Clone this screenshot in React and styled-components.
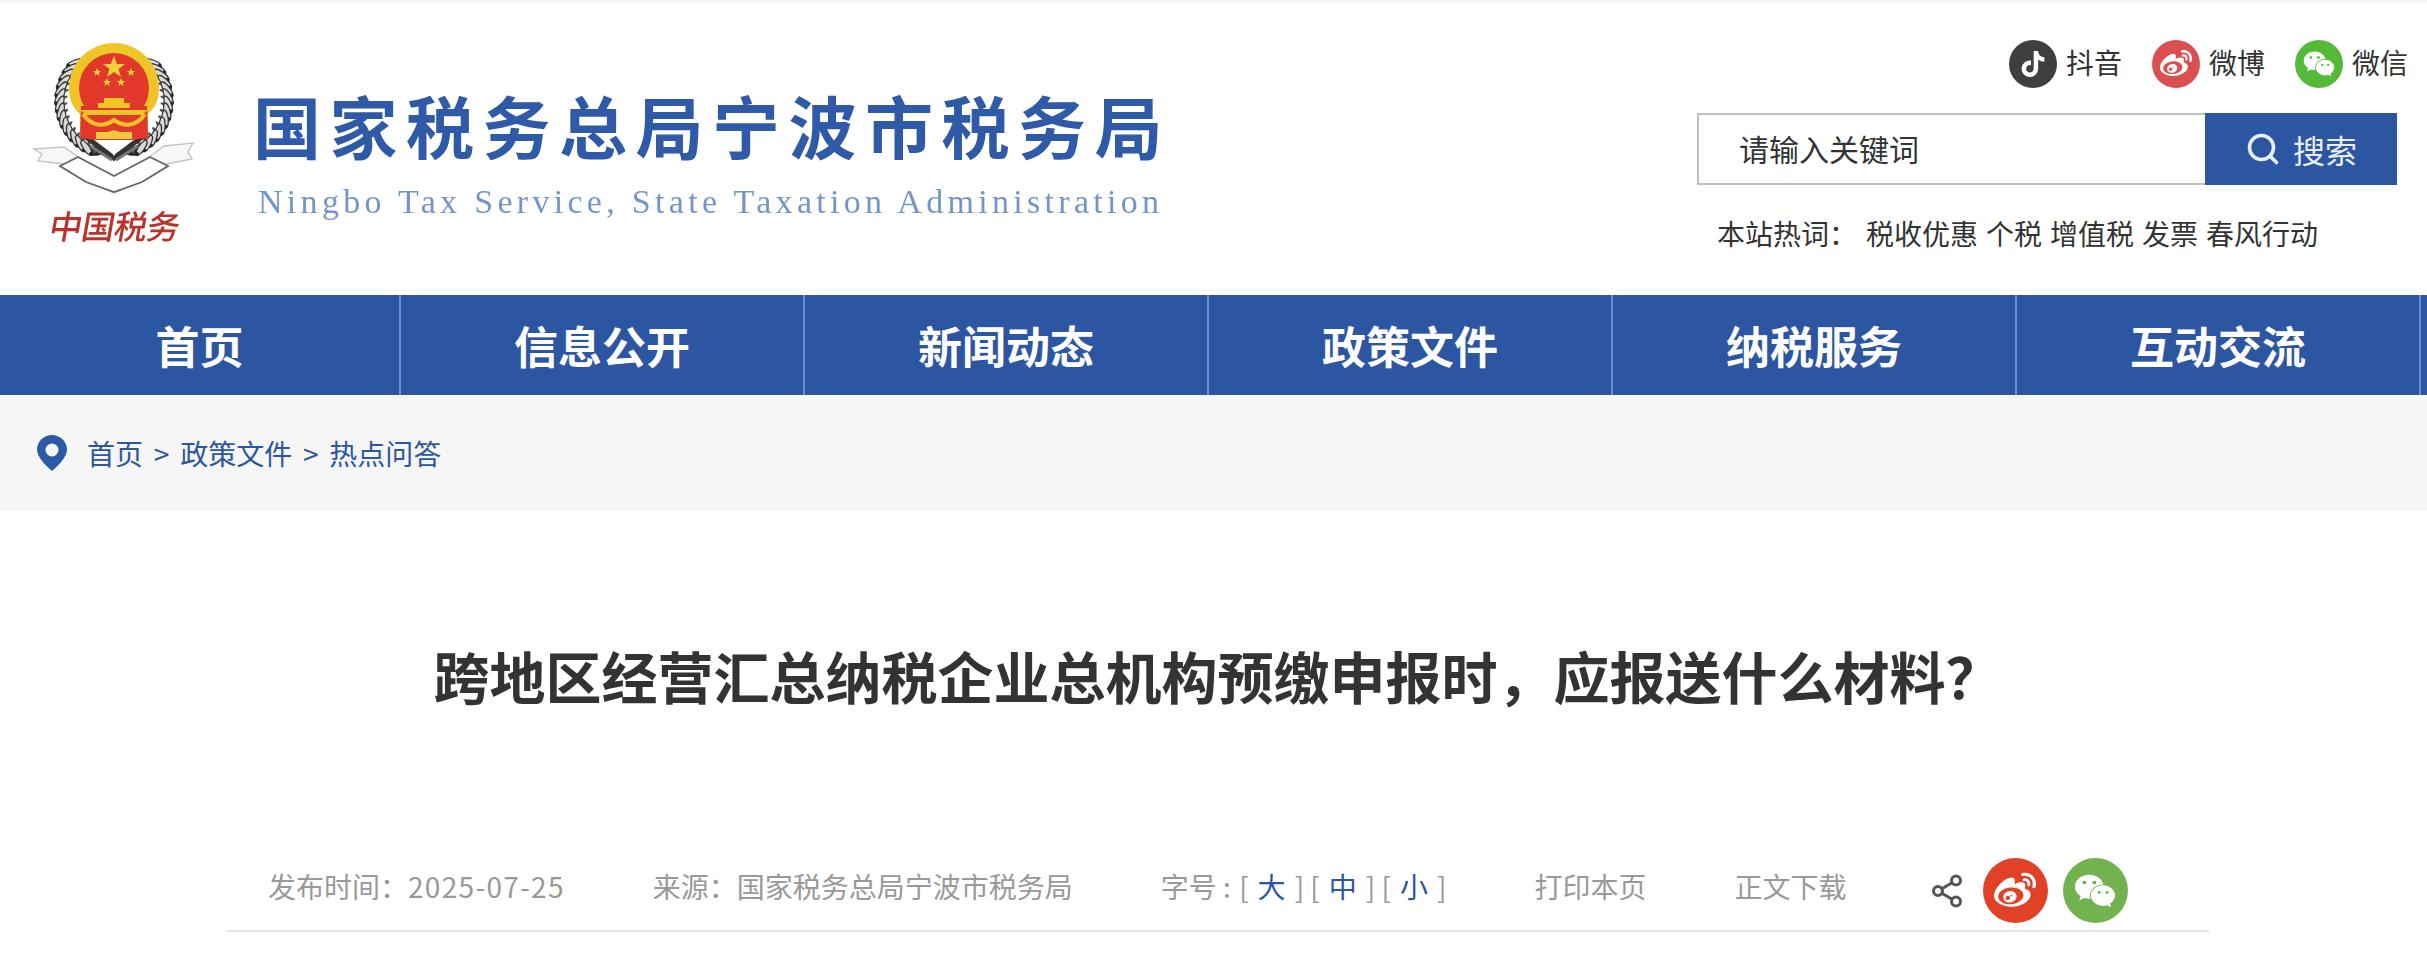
import React from 'react';
import styled, { createGlobalStyle } from 'styled-components';
import { FaTiktok, FaWeibo, FaWeixin } from 'react-icons/fa';
import { Search, Share2 } from 'lucide-react';

const BLUE = '#2c56a2';
const SANS = '"Noto Sans CJK SC", "Noto Sans", sans-serif';

const Global = createGlobalStyle`
  html, body { margin: 0; padding: 0; background: #fff; overflow: hidden; }
  body { font-family: ${SANS}; color: #333; }
  * { box-sizing: border-box; }
`;

const Page = styled.div`
  width: 2427px;
  height: 954px;
  overflow: hidden;
  border-top: 3px solid #f5f5f5;
`;

const Header = styled.header`
  height: 292px;
  display: flex;
  justify-content: space-between;
`;

const Brand = styled.div`
  display: flex;
  align-items: flex-start;
  padding: 27px 0 0 20px;
`;

const Mark = styled.div`
  width: 190px;
  display: flex;
  flex-direction: column;
  align-items: center;
  filter: blur(0.6px);
`;

const MarkText = styled.div`
  font-size: 33px;
  line-height: 50px;
  font-weight: 500;
  letter-spacing: -0.5px;
  color: #b9332a;
  transform: skewX(-10deg);
  white-space: nowrap;
`;

const Titles = styled.div`
  margin: 53px 0 0 43px;
  filter: blur(0.5px);
`;

const SiteName = styled.div`
  font-size: 68px;
  line-height: 84px;
  font-weight: 700;
  letter-spacing: 8.500px;
  color: #2e5aa8;
  white-space: nowrap;
`;

const SiteEn = styled.div`
  margin: 15px 0 0 5px;
  font-family: "Liberation Serif", serif;
  font-size: 34px;
  line-height: 40px;
  letter-spacing: 4.300px;
  color: #7595ca;
  white-space: nowrap;
`;

const Tools = styled.div`
  width: 730px;
  display: flex;
  flex-direction: column;
  padding-top: 37px;
`;

const Socials = styled.div`
  height: 48px;
  display: flex;
  justify-content: flex-end;
  gap: 30px;
  padding-right: 19px;
`;

const Social = styled.div`
  display: flex;
  align-items: center;
  gap: 9px;
  font-size: 28px;
  color: #333;
`;

const SocialLabel = styled.span`
  line-height: 40px;
  margin-top: -5px;
`;

const SocialIcon = styled.span`
  width: 48px;
  height: 48px;
  border-radius: 50%;
  display: flex;
  align-items: center;
  justify-content: center;
  color: #fff;
  background: ${p => p.$bg};
`;

const SearchBar = styled.div`
  margin: 25px 0 0 0;
  width: 700px;
  height: 72px;
  display: flex;
`;

const SearchField = styled.div`
  flex: 1;
  border: 2px solid #c0c0c0;
  border-right: 0;
  padding-left: 40px;
  font-size: 30px;
  line-height: 66px;
  color: #333;
`;

const SearchButton = styled.div`
  width: 192px;
  background: ${BLUE};
  color: #e8eefa;
  display: flex;
  align-items: center;
  justify-content: center;
  gap: 12px;
  font-size: 32px;
`;

const Hot = styled.div`
  margin: 28px 0 0 20px;
  display: flex;
  gap: 8px;
  font-size: 28px;
  line-height: 40px;
  color: #333;
`;

const HotLabel = styled.span`
  margin-right: 1px;
`;

const Nav = styled.nav`
  height: 100px;
  display: flex;
  background: ${BLUE};
`;

const NavItem = styled.div`
  flex: 0 0 404px;
  border-right: 2px solid #6f8cc4;
  text-align: center;
  color: #fff;
  font-size: 44px;
  font-weight: 700;
  line-height: 100px;
  &:first-child { flex-basis: 401px; }
`;

const Crumbs = styled.div`
  height: 116px;
  background: #f6f6f6;
  display: flex;
  align-items: center;
  padding: 0 0 0 37px;
  color: ${BLUE};
  font-size: 28px;
`;

const CrumbPin = styled.svg`
  width: 30px;
  height: 36px;
  margin-right: 20px;
  flex: none;
`;

const CrumbSep = styled.span`
  margin: 0 10.800px;
`;

const Article = styled.main`
  margin: 0 218px 0 226px;
`;

const Title = styled.h1`
  margin: 0;
  padding-top: 134px;
  text-align: center;
  font-size: 56px;
  line-height: 60px;
  font-weight: 700;
  color: #333;
`;

const Meta = styled.div`
  margin-top: 152px;
  height: 75px;
  padding: 0 0 9px 42px;
  display: flex;
  align-items: center;
  gap: 88px;
  border-bottom: 2px solid #e5e5e5;
  font-size: 28px;
  color: #999;
  white-space: nowrap;
`;

const MetaItem = styled.span`
  margin-bottom: 6px;
`;

const MetaDate = styled.span`
  letter-spacing: 1.300px;
`;

const Size = styled.a`
  color: ${BLUE};
  margin: 0 9px;
`;

const Brackets = styled.span`
  margin-left: 2px;
`;

const ShareGroup = styled.div`
  display: flex;
  align-items: center;
  gap: 15px;
  margin: 3px 0 0 -6px;
`;

const ShareIcon = styled(Share2)`
  color: #555;
  margin-right: 3px;
`;

const ShareBtn = styled.span`
  width: 65px;
  height: 65px;
  border-radius: 50%;
  background: ${p => p.$bg};
  color: #fff;
  display: flex;
  align-items: center;
  justify-content: center;
`;

const leaves = [];
for (let a = 142; a <= 246; a += 8) {
  const r = (a * Math.PI) / 180;
  leaves.push({ x: 52 * Math.cos(r), y: -52 * Math.sin(r), a });
}

function Emblem() {
  return (
    <svg width="190" height="170" viewBox="0 0 190 170">
      {/* ribbon ends and book */}
      <path d="M14 119 L44 117 L60 128 L94 150 L128 128 L144 116 L173 113 L168 122 L172 129 L146 134 L124 150 L94 163 L64 150 L44 134 L18 131 L22 124 Z" fill="#f7f7f7" stroke="#c4c4c4" strokeWidth="1.400" />
      <path d="M40 136 L58 127 L94 146 L130 127 L148 136 L122 152 L94 162 L66 152 Z" fill="#fff" stroke="#666" strokeWidth="1.800" />
      {/* wreath */}
      {[1, -1].map(side => (
        <g key={side} transform={`translate(94 71) scale(${side} 1)`}>
          {leaves.map((l, i) => (
            <g key={i} transform={`translate(${l.x} ${l.y}) rotate(${-l.a + 90})`}>
              <ellipse cx="6" cy="-2" rx="9" ry="3" fill="#d8d8d8" stroke="#333" strokeWidth="1.200" transform="rotate(32 6 -2)" />
              <ellipse cx="-6" cy="-2" rx="9" ry="2.800" fill="#242424" transform="rotate(-32 -6 -2)" />
              <ellipse cx="0" cy="2" rx="5" ry="1.600" fill="#555" transform="rotate(70)" />
            </g>
          ))}
        </g>
      ))}
      <path d="M62 104 L94 128 L126 104" fill="none" stroke="#333" strokeWidth="5" />
      <path d="M70 116 L92 130 M118 116 L96 130" stroke="#777" strokeWidth="3" fill="none" />
      <path d="M88 116 L94 111 L100 116 L94 126 Z" fill="#fff" />
      {/* badge */}
      <path d="M49 58 A45 45 0 1 1 139 58 C139 70 135 78 128 84 L128 108 L60 108 L60 84 C53 78 49 70 49 58 Z" fill="#efc427" />
      <circle cx="94" cy="58" r="35" fill="#e0392b" />
      <path d="M61 76 L127 76 L128 108 L112 110 L76 110 L60 108 Z" fill="#e0392b" />
      <path d="M94 26 L97 34 L105 34 L98.500 39 L101 47 L94 42 L87 47 L89.500 39 L83 34 L91 34 Z" fill="#f6d23a" />
      {[[77, 42], [111, 42], [87, 52], [101, 52]].map(([x, y]) => (
        <path key={x} d={`M${x} ${y - 4} L${x + 1.200} ${y - 1} L${x + 4} ${y - 1} L${x + 1.800} ${y + 1} L${x + 2.600} ${y + 4} L${x} ${y + 2} L${x - 2.600} ${y + 4} L${x - 1.800} ${y + 1} L${x - 4} ${y - 1} L${x - 1.200} ${y - 1} Z`} fill="#f6d23a" />
      ))}
      <path d="M84 68 H104 V73 H110 V78 H78 V73 H84 Z" fill="#efc427" />
      <path d="M60 80 H128 L122 85 H66 Z" fill="#efc427" />
      <path d="M63 84 C72 97 84 97 94 90 C104 97 116 97 125 84" fill="none" stroke="#efc427" strokeWidth="4" />
      <path d="M76 102 H88 L94 100 L100 102 H112 V109 H76 Z" fill="#f1c93a" />
    </svg>
  );
}

function PinIcon() {
  return (
    <CrumbPin viewBox="0 0 30 36">
      <path fillRule="evenodd" d="M15 0C6.700 0 0 6.600 0 14.600 0 22.500 9.500 31.500 15 36c5.500-4.500 15-13.500 15-21.400C30 6.600 23.300 0 15 0ZM15 8.500a6.500 6.500 0 1 1 0 13 6.500 6.500 0 0 1 0-13Z" fill="#2c5aa8" />
    </CrumbPin>
  );
}

const navItems = ['首页', '信息公开', '新闻动态', '政策文件', '纳税服务', '互动交流'];
const hotWords = ['税收优惠', '个税', '增值税', '发票', '春风行动'];

export default function App() {
  return (
    <>
      <Global />
      <Page>
        <Header>
          <Brand>
            <Mark>
              <Emblem />
              <MarkText>中国税务</MarkText>
            </Mark>
            <Titles>
              <SiteName>国家税务总局宁波市税务局</SiteName>
              <SiteEn>Ningbo Tax Service, State Taxation Administration</SiteEn>
            </Titles>
          </Brand>
          <Tools>
            <Socials>
              <Social><SocialIcon $bg="#3f3f3f"><FaTiktok size={26} /></SocialIcon><SocialLabel>抖音</SocialLabel></Social>
              <Social><SocialIcon $bg="#d9514f"><FaWeibo size={32} /></SocialIcon><SocialLabel>微博</SocialLabel></Social>
              <Social><SocialIcon $bg="#55b93a"><FaWeixin size={32} /></SocialIcon><SocialLabel>微信</SocialLabel></Social>
            </Socials>
            <SearchBar>
              <SearchField>请输入关键词</SearchField>
              <SearchButton><Search size={36} strokeWidth={2.4} />搜索</SearchButton>
            </SearchBar>
            <Hot>
              <HotLabel>本站热词：</HotLabel>
              {hotWords.map(w => <span key={w}>{w}</span>)}
            </Hot>
          </Tools>
        </Header>
        <Nav>
          {navItems.map(n => <NavItem key={n}>{n}</NavItem>)}
        </Nav>
        <Crumbs>
          <PinIcon />
          首页<CrumbSep>&gt;</CrumbSep>政策文件<CrumbSep>&gt;</CrumbSep>热点问答
        </Crumbs>
        <Article>
          <Title>跨地区经营汇总纳税企业总机构预缴申报时，应报送什么材料？</Title>
          <Meta>
            <MetaItem>发布时间：<MetaDate>2025-07-25</MetaDate></MetaItem>
            <MetaItem>来源：国家税务总局宁波市税务局</MetaItem>
            <MetaItem>字号 :<Brackets> [<Size>大</Size>] [<Size>中</Size>] [<Size>小</Size>]</Brackets></MetaItem>
            <MetaItem>打印本页</MetaItem>
            <MetaItem>正文下载</MetaItem>
            <ShareGroup>
              <ShareIcon size={36} />
              <ShareBtn $bg="#e04127"><FaWeibo size={42} /></ShareBtn>
              <ShareBtn $bg="#72b34f"><FaWeixin size={42} /></ShareBtn>
            </ShareGroup>
          </Meta>
        </Article>
      </Page>
    </>
  );
}
